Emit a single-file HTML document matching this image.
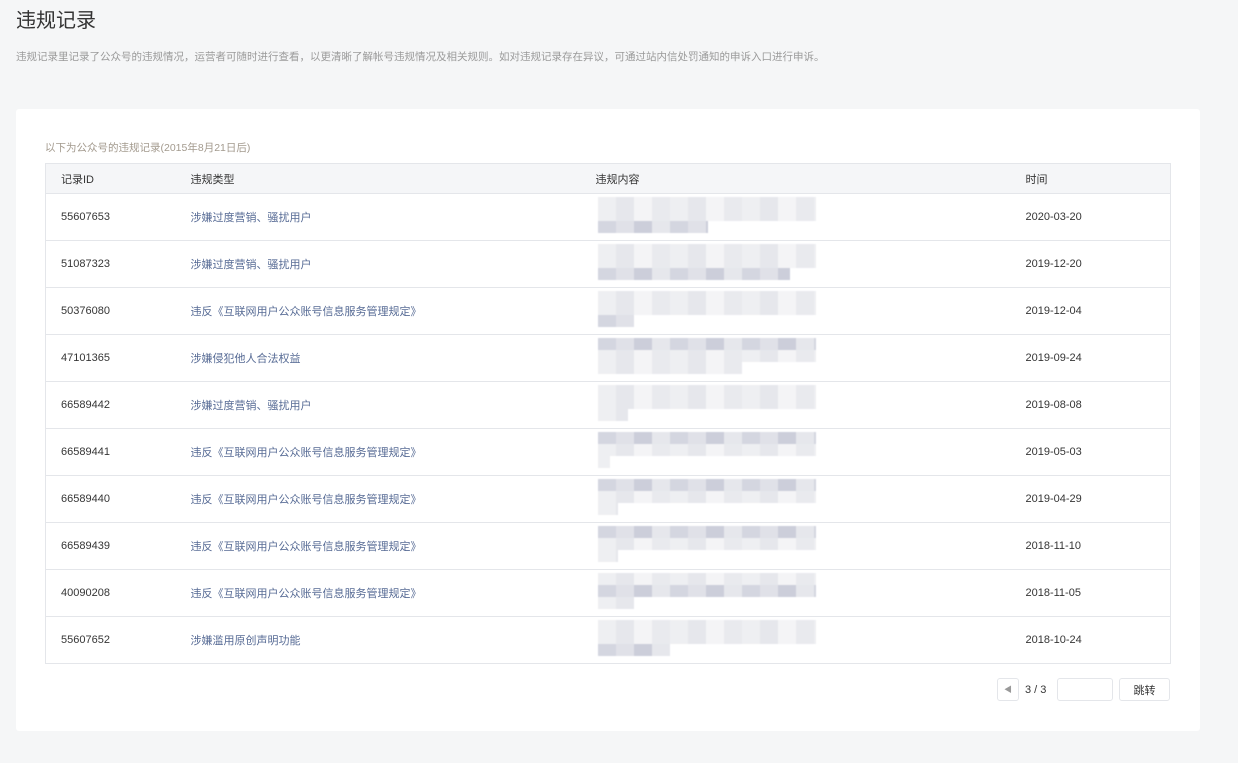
<!DOCTYPE html>
<html><head><meta charset="utf-8"><style>
*{margin:0;padding:0;box-sizing:border-box}
body{width:1238px;height:763px;background:#f5f6f7;font-family:"Liberation Sans","Noto Sans CJK SC",sans-serif;color:#353535;position:relative;overflow:hidden}
h1{position:absolute;left:16px;top:4px;font-size:20px;font-weight:normal;color:#333}
.desc{position:absolute;left:16px;top:49px;font-size:10.5px;color:#9a9a9a}
.card{position:absolute;left:16px;top:109px;width:1184px;height:622px;background:#fff;border-radius:3px}
.note{position:absolute;left:29px;top:31px;font-size:10.5px;color:#a39a8e}
table{position:absolute;left:29px;top:54px;width:1126px;border-collapse:collapse;border:1px solid #e4e6ea;font-size:11px}
th{height:30px;background:#f5f6f8;text-align:left;font-weight:normal;color:#353535;border-bottom:1px solid #e4e6ea}
td{height:47px;border-bottom:1px solid #e4e6ea;position:relative}
th:nth-child(1),td:nth-child(1){padding-left:15px;width:145px}
th:nth-child(2),td:nth-child(2){width:405px}
th:nth-child(3),td:nth-child(3){width:430px}
a{color:#576b95;text-decoration:none}
.blur{position:absolute;left:2px;top:3px;width:218px;height:38px;filter:blur(0.6px)}
.blur i{display:block;height:12px;background:repeating-linear-gradient(90deg,#eeeff2 0 18px,#e6e7ec 18px 36px,#f4f4f6 36px 54px,#e9eaee 54px 72px)}
.blur i.d{background:repeating-linear-gradient(90deg,#d4d6e0 0 18px,#e0e1e8 18px 36px,#ccceda 36px 54px,#e6e7ec 54px 72px)}
.pg{position:absolute;top:569px;height:23px;border:1px solid #e4e6ea;border-radius:3px;background:#fff;font-size:11px;display:flex;align-items:center;justify-content:center}
</style></head><body>
<h1>违规记录</h1>
<div class="desc">违规记录里记录了公众号的违规情况，运营者可随时进行查看，以更清晰了解帐号违规情况及相关规则。如对违规记录存在异议，可通过站内信处罚通知的申诉入口进行申诉。</div>
<div class="card">
<div class="note">以下为公众号的违规记录(2015年8月21日后)</div>
<table>
<tr><th>记录ID</th><th>违规类型</th><th>违规内容</th><th>时间</th></tr>
<tr><td>55607653</td><td><a>涉嫌过度营销、骚扰用户</a></td><td><div class="blur"><i></i><i></i><i class="d" style="width:110px"></i></div></td><td>2020-03-20</td></tr>
<tr><td>51087323</td><td><a>涉嫌过度营销、骚扰用户</a></td><td><div class="blur"><i></i><i></i><i class="d" style="width:192px"></i></div></td><td>2019-12-20</td></tr>
<tr><td>50376080</td><td><a>违反《互联网用户公众账号信息服务管理规定》</a></td><td><div class="blur"><i></i><i></i><i class="d" style="width:36px"></i></div></td><td>2019-12-04</td></tr>
<tr><td>47101365</td><td><a>涉嫌侵犯他人合法权益</a></td><td><div class="blur"><i class="d"></i><i></i><i style="width:144px"></i></div></td><td>2019-09-24</td></tr>
<tr><td>66589442</td><td><a>涉嫌过度营销、骚扰用户</a></td><td><div class="blur"><i></i><i></i><i style="width:30px"></i></div></td><td>2019-08-08</td></tr>
<tr><td>66589441</td><td><a>违反《互联网用户公众账号信息服务管理规定》</a></td><td><div class="blur"><i class="d"></i><i></i><i style="width:12px"></i></div></td><td>2019-05-03</td></tr>
<tr><td>66589440</td><td><a>违反《互联网用户公众账号信息服务管理规定》</a></td><td><div class="blur"><i class="d"></i><i></i><i style="width:20px"></i></div></td><td>2019-04-29</td></tr>
<tr><td>66589439</td><td><a>违反《互联网用户公众账号信息服务管理规定》</a></td><td><div class="blur"><i class="d"></i><i></i><i style="width:20px"></i></div></td><td>2018-11-10</td></tr>
<tr><td>40090208</td><td><a>违反《互联网用户公众账号信息服务管理规定》</a></td><td><div class="blur"><i></i><i class="d"></i><i style="width:36px"></i></div></td><td>2018-11-05</td></tr>
<tr><td>55607652</td><td><a>涉嫌滥用原创声明功能</a></td><td><div class="blur"><i></i><i></i><i class="d" style="width:72px"></i></div></td><td>2018-10-24</td></tr>
</table>
<div class="pg" style="left:981px;width:22px;color:#999;font-size:8px">◀</div>
<div style="position:absolute;left:1009px;top:575px;font-size:11px">3 / 3</div>
<div class="pg" style="left:1041px;width:56px"></div>
<div class="pg" style="left:1103px;width:51px">跳转</div>
</div>
</body></html>
